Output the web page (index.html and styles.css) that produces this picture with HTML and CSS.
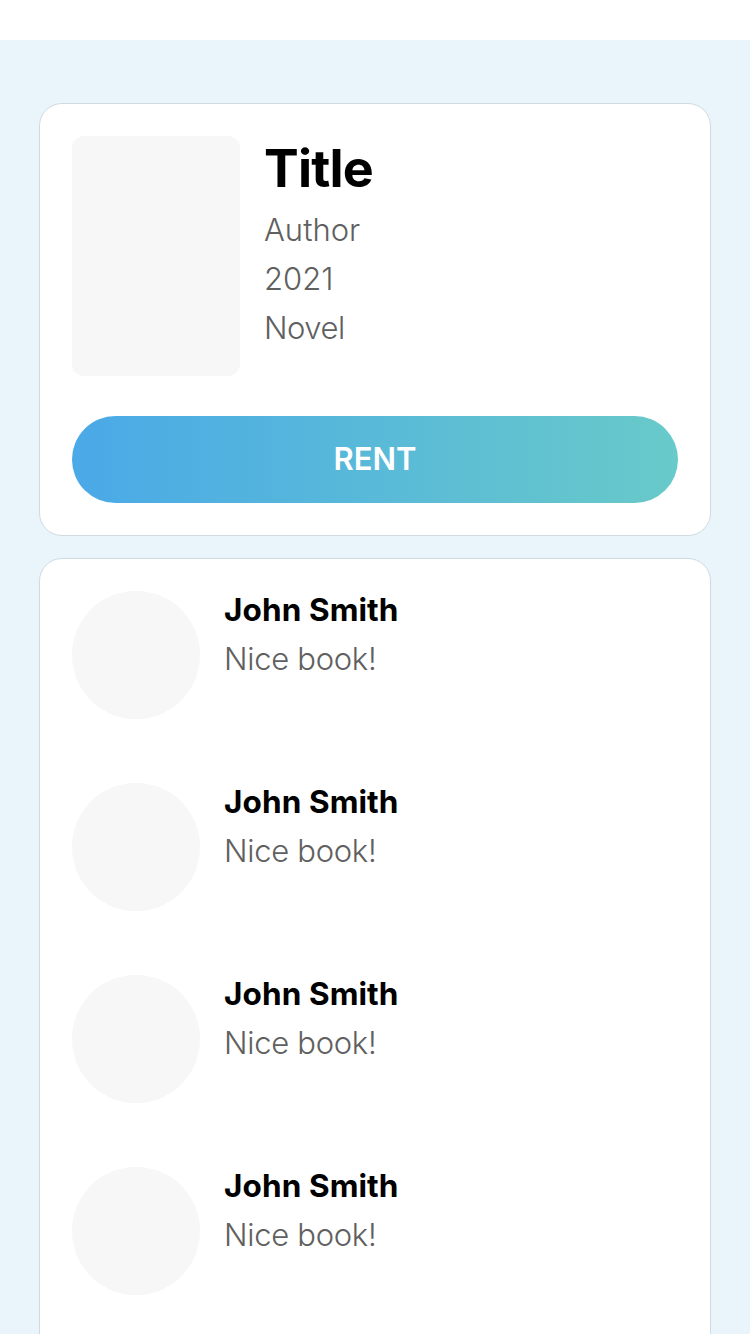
FILE: index.html
```html
<!DOCTYPE html>
<html lang="en">
<head>
<meta charset="utf-8">
<title>Book</title>
<link rel="stylesheet" href="styles.css">
</head>
<body>
<header class="status-bar"></header>
<main class="content">
  <section class="card book-card">
    <div class="book">
      <div class="cover"></div>
      <div class="details">
        <h1 class="title">Title</h1>
        <p class="meta author">Author</p>
        <p class="meta year">2021</p>
        <p class="meta genre">Novel</p>
      </div>
    </div>
    <button class="rent" type="button">RENT</button>
  </section>
  <section class="card reviews">
    <article class="review"><div class="avatar"></div><div class="body"><h2 class="name">John Smith</h2><p class="meta comment">Nice book!</p></div></article>
    <article class="review"><div class="avatar"></div><div class="body"><h2 class="name">John Smith</h2><p class="meta comment">Nice book!</p></div></article>
    <article class="review"><div class="avatar"></div><div class="body"><h2 class="name">John Smith</h2><p class="meta comment">Nice book!</p></div></article>
    <article class="review"><div class="avatar"></div><div class="body"><h2 class="name">John Smith</h2><p class="meta comment">Nice book!</p></div></article>
  </section>
</main>
</body>
</html>
```

FILE: styles.css
```css
* { box-sizing: border-box; margin: 0; padding: 0; }
body { height: 1334px; overflow: hidden; display: flex; flex-direction: column; background: #e9f5fa; font-family: Inter, Roboto, sans-serif; color: #000; }
.status-bar { height: 40px; flex: none; background: #fff; }
.content { flex: none; padding: 63px 39px 0; display: flex; flex-direction: column; gap: 22px; }
.card { background: #fff; border: 1px solid #d0dbdf; border-radius: 23px; padding: 32px; }
.book-card { height: 433px; }
.reviews { height: 840px; display: flex; flex-direction: column; gap: 64px; }
.book { display: flex; gap: 24px; }
.cover { width: 168px; height: 240px; border-radius: 12px; background: #f7f7f7; }
.title { font-size: 52px; line-height: 66px; font-weight: 700; letter-spacing: -0.8px; margin-bottom: 3px; }
.meta { font-size: 31px; line-height: 49px; font-weight: 300; color: #606060; }
.author { letter-spacing: 0; }
.genre { letter-spacing: -0.5px; }
.comment { letter-spacing: -0.3px; }
.rent { display: block; width: 606px; height: 87px; margin-top: 40px; padding-bottom: 2px; border: 0; border-radius: 44px; background: linear-gradient(90deg, #4aa9e7, #68cac9); color: #fff; font: 600 31px/85px Inter, sans-serif; }
.review { display: flex; gap: 24px; height: 128px; flex: none; }
.avatar { width: 128px; height: 128px; border-radius: 50%; background: #f7f7f7; }
.name { font-size: 31.5px; line-height: 38px; font-weight: 700; letter-spacing: 0.1px; margin-bottom: 5px; }
```
